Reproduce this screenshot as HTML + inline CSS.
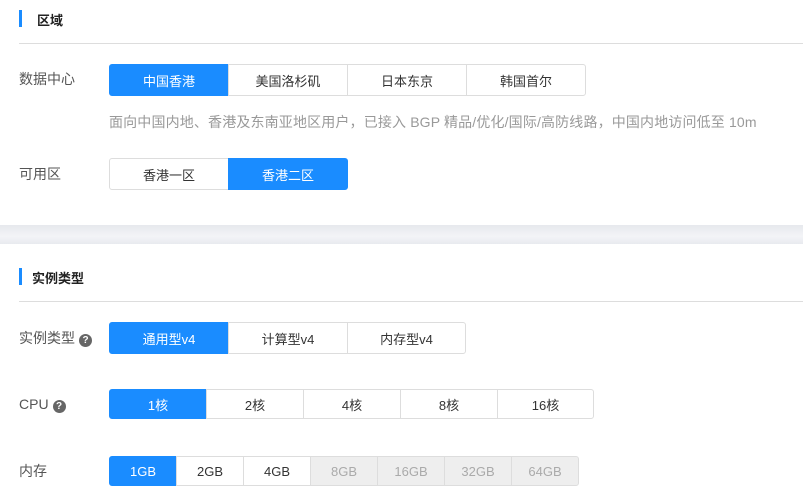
<!DOCTYPE html>
<html><head><meta charset="utf-8"><style>
*{margin:0;padding:0;box-sizing:border-box}
body{width:803px;height:496px;overflow:hidden;background:#fff;font-family:"Liberation Sans","Noto Sans CJK SC",sans-serif;font-size:13px;color:#333;position:relative}
.abs{position:absolute}
.bar{position:absolute;left:19px;width:3px;height:17px;background:#1a8cff}
.title{position:absolute;font-weight:bold;font-size:13px;color:#222}
.hr{position:absolute;left:19px;right:0;height:1px;background:#ddd}
.lbl{position:absolute;left:19px;font-size:14px;color:#555;line-height:18px}
.grp{position:absolute;left:109px;display:flex}
.grp div{border:1px solid #ddd;margin-left:-1px;display:flex;align-items:center;justify-content:center;font-size:13px;color:#333;background:#fff}
.grp div:first-child{margin-left:0;border-radius:3px 0 0 3px}
.grp div:last-child{border-radius:0 3px 3px 0}
.grp div.on{background:#1a8cff;border-color:#1a8cff;color:#fff}
.grp div.dis{background:#eee;color:#aaa}
.q{display:inline-block;width:13px;height:13px;border-radius:50%;background:#666;color:#fff;font-size:10px;font-weight:bold;text-align:center;line-height:13px;vertical-align:0px;margin-left:4px}
.gap{position:absolute;left:0;right:0;top:225px;height:19px;background:linear-gradient(#e6e8ed,#f3f4f7 60%,#e8eaef)}
</style></head><body>
<div class="bar" style="top:10px"></div>
<div class="title" style="left:37px;top:10px">区域</div>
<div class="hr" style="top:43px"></div>
<div class="lbl" style="top:70px">数据中心</div>
<div class="grp" style="top:64px;height:32px"><div class="on" style="width:120px">中国香港</div><div style="width:120px">美国洛杉矶</div><div style="width:120px">日本东京</div><div style="width:120px">韩国首尔</div></div>
<div class="abs" style="left:109px;top:112px;color:#999;font-size:14px;letter-spacing:0.15px">面向中国内地、香港及东南亚地区用户，已接入 BGP 精品/优化/国际/高防线路，中国内地访问低至 10m</div>
<div class="lbl" style="top:165px">可用区</div>
<div class="grp" style="top:158px;height:32px"><div style="width:120px">香港一区</div><div class="on" style="width:120px">香港二区</div></div>
<div class="gap"></div>
<div class="bar" style="top:268px"></div>
<div class="title" style="left:32px;top:268px">实例类型</div>
<div class="hr" style="top:301px"></div>
<div class="lbl" style="top:329px">实例类型<span class="q">?</span></div>
<div class="grp" style="top:322px;height:32px"><div class="on" style="width:120px">通用型v4</div><div style="width:120px">计算型v4</div><div style="width:119px">内存型v4</div></div>
<div class="lbl" style="top:395px">CPU<span class="q">?</span></div>
<div class="grp" style="top:389px;height:30px"><div class="on" style="width:98px">1核</div><div style="width:98px">2核</div><div style="width:98px">4核</div><div style="width:98px">8核</div><div style="width:97px">16核</div></div>
<div class="lbl" style="top:462px">内存</div>
<div class="grp" style="top:456px;height:30px"><div class="on" style="width:68px">1GB</div><div style="width:68px">2GB</div><div style="width:68px">4GB</div><div class="dis" style="width:68px">8GB</div><div class="dis" style="width:68px">16GB</div><div class="dis" style="width:68px">32GB</div><div class="dis" style="width:68px">64GB</div></div>
</body></html>
